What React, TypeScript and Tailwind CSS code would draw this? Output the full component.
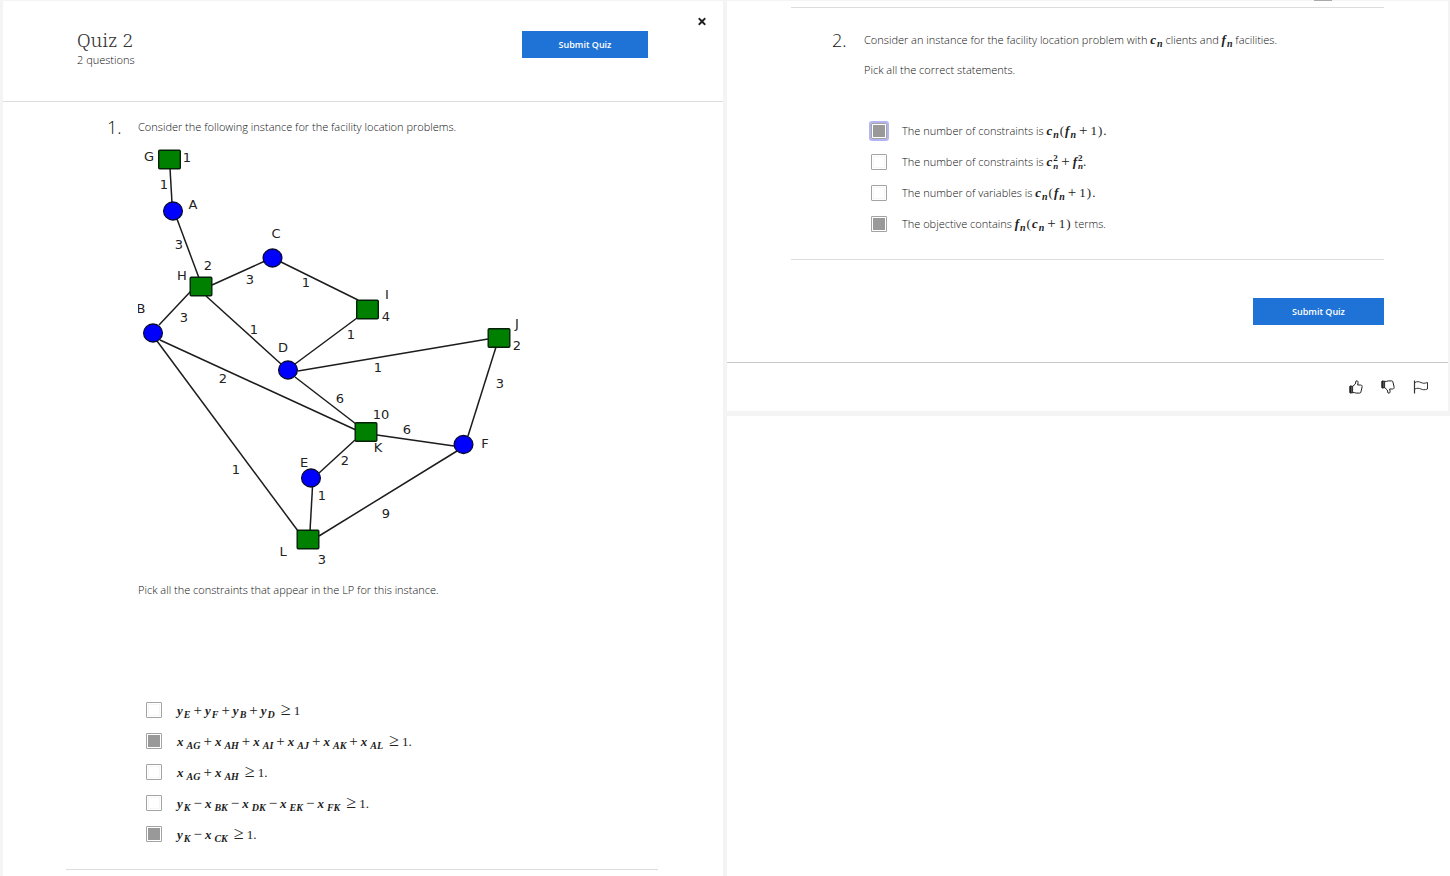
import { useId, useState, type ReactNode } from "react";
import { FaTimes } from "react-icons/fa";

type Point = [number, number];

const clients: Record<string, Point> = {
  A: [173, 211],
  B: [153, 333],
  C: [272.5, 258],
  D: [288, 370],
  E: [311, 478],
  F: [463.5, 444.5],
};

const facilities: Record<string, Point> = {
  G: [169.5, 159.5],
  H: [201, 286.5],
  I: [367.5, 309.5],
  J: [499, 338],
  K: [366, 432],
  L: [308, 539.5],
};

const edges: [number, number, number, number][] = [
  [170, 168, 172, 203],
  [177, 219, 199, 278],
  [212, 285, 265, 261],
  [281, 262, 358, 300],
  [191, 291, 159, 325],
  [206, 296, 281, 364],
  [357, 318, 295, 364],
  [298, 371, 488, 339],
  [496, 347, 468, 436],
  [295, 377, 356, 424],
  [160, 340, 356, 430],
  [157, 341, 298, 531],
  [377, 435, 454, 446],
  [355, 440, 319, 473],
  [312.5, 487, 310, 531],
  [319, 536, 457, 451],
];

const labels: [string, number, number][] = [
  ["G", 149, 157], ["1", 187, 158], ["1", 164, 185], ["A", 193, 205],
  ["3", 179, 245], ["2", 208, 266], ["H", 182, 276], ["C", 276, 234],
  ["3", 250, 280], ["1", 306, 283], ["I", 387, 295], ["4", 386, 317],
  ["J", 517, 324], ["2", 517, 346], ["B", 141, 309], ["3", 184, 318],
  ["1", 254, 330], ["D", 283, 348], ["1", 351, 335], ["1", 378, 368],
  ["2", 223, 379], ["6", 340, 399], ["3", 500, 384], ["10", 381, 415],
  ["6", 407, 430], ["K", 378, 448], ["F", 485, 444], ["E", 304, 463],
  ["2", 345, 461], ["1", 236, 470], ["1", 322, 496], ["9", 386, 514],
  ["L", 283, 552], ["3", 322, 560],
];

function Graph() {
  return (
    <svg
      viewBox="138 145 396 426"
      width={396}
      height={426}
      role="img"
      aria-label="Facility location instance"
      className="block max-w-full"
    >
      <g stroke="#1c1c1c" strokeWidth="1.5">
        {edges.map(([x1, y1, x2, y2], i) => (
          <line key={i} x1={x1} y1={y1} x2={x2} y2={y2} />
        ))}
      </g>
      {Object.entries(clients).map(([name, [x, y]]) => (
        <ellipse key={name} cx={x} cy={y} rx="9.4" ry="9" fill="#0000fe" stroke="#0a0a30" strokeWidth="1.3" />
      ))}
      {Object.entries(facilities).map(([name, [x, y]]) => (
        <rect key={name} x={x - 10.8} y={y - 9.2} width="21.6" height="18.4" rx="1" fill="#008000" stroke="#06200a" strokeWidth="1.4" />
      ))}
      <g fill="#222" textAnchor="middle" className="font-['DejaVu_Sans',sans-serif] text-[13px] font-normal">
        {labels.map(([text, x, y], i) => (
          <text key={i} x={x} y={y + 4}>{text}</text>
        ))}
      </g>
    </svg>
  );
}

function M({ children }: { children: ReactNode }) {
  return (
    <span className="inline-flex items-baseline font-['Liberation_Serif',serif] text-[13px] leading-4 font-normal text-[#222]">
      {children}
    </span>
  );
}

function V({ v, sub, sup }: { v: string; sub: string; sup?: string }) {
  return (
    <span className="inline-flex items-baseline font-bold italic">
      {v}
      {sup ? (
        <span className="relative -top-[5px] ml-px inline-grid h-2 text-[9px] leading-[8px]">
          <span className="not-italic">{sup}</span>
          <span>{sub}</span>
        </span>
      ) : (
        <span className={"relative top-[3px] text-[10px] leading-none " + (v === "x" ? "ml-[3px]" : "ml-px")}>{sub}</span>
      )}
    </span>
  );
}

function Op({ children }: { children: ReactNode }) {
  return <span className="px-[3px] text-[15px] leading-none">{children}</span>;
}

function Paren({ children }: { children: ReactNode }) {
  return <span className="px-px">{children}</span>;
}

function Sum({ terms, op, end }: { terms: [string, string][]; op: string; end: string }) {
  return (
    <M>
      {terms.map(([v, sub], i) => (
        <span key={sub} className="inline-flex items-baseline">
          {i > 0 && <Op>{op}</Op>}
          <V v={v} sub={sub} />
        </span>
      ))}
      <span className="pr-[3px] pl-[6px] text-[18px] leading-none">≥</span>
      <span>{end}</span>
    </M>
  );
}

function Option({ checked, focused, children }: { checked?: boolean; focused?: boolean; children: ReactNode }) {
  const id = useId();
  const [on, setOn] = useState(!!checked);
  return (
    <li className="flex h-[31px] items-center gap-[15px]">
      <input
        id={id}
        type="checkbox"
        checked={on}
        onChange={(e) => setOn(e.target.checked)}
        className={
          "size-4 shrink-0 appearance-none rounded-[1px] border border-[#a3a3a3] bg-white shadow-[inset_0_0_0_1px_#fff,inset_0_0_0_2px_#f6f6f6] checked:bg-[#999] checked:shadow-[inset_0_0_0_1px_#fff]" +
          (focused ? " outline-2 outline-[#b4b4f4]" : "")
        }
      />
      <label htmlFor={id} className="flex items-baseline whitespace-pre">
        {children}
      </label>
    </li>
  );
}

function Submit({ className }: { className: string }) {
  return (
    <button type="button" className={"h-[27px] bg-[#2073d6] text-[9px] font-semibold text-white " + className}>
      Submit Quiz
    </button>
  );
}

function Thumb({ down }: { down?: boolean }) {
  return (
    <svg width="14" height="14" viewBox="0 0 14 14" fill="none" stroke="#222" strokeWidth="1" strokeLinejoin="round" className={down ? "-scale-y-100" : ""}>
      <path d="M1 6.200h2.600v6.600H1z" />
      <path d="M1 6.200h1.200v6.600H1z" fill="#222" />
      <path d="M3.600 6.500 6.300 4 7 1c1.500-.5 2.300.4 2.100 1.800L8.600 5h3c1.400 0 1.700 1.100 1.500 2l-1.200 5.100c-.2.700-.6 1-1.300 1H7.200L5.400 12.600H3.600" />
    </svg>
  );
}

function Flag() {
  return (
    <svg width="16" height="14" viewBox="0 0 16 14" fill="none" stroke="#333" strokeWidth="1">
      <path d="M1.500 .5v13" strokeWidth="1.200" />
      <path d="M2 2.500c2-1.200 4-1 6 0s3.500 1 6.500 0v6.500c-3 1-4.500 1-6.500 0s-4-1-6 0" />
    </svg>
  );
}

export default function App() {
  return (
    <div className="flex min-h-screen items-stretch bg-[#f4f4f4] pl-[3px] font-['Open_Sans',sans-serif] text-[11px] leading-4 font-light text-[#111]">
      <main className="mt-px min-w-0 flex-[720] bg-white">
        <header className="flex h-[101px] items-start border-b border-[#ddd]">
          <div className="flex-1 pt-[27px] pl-[74px]">
            <h1 className="font-['Noto_Serif','DejaVu_Serif',serif] text-[19px] leading-6 font-light text-[#333]">Quiz 2</h1>
            <p>2 questions</p>
          </div>
          <Submit className="mt-[30px] w-[126px]" />
          <button type="button" aria-label="Close" className="mt-[15px] mr-4 ml-[49px] flex size-[10px] items-center justify-center text-[#222]">
            <FaTimes size={11} />
          </button>
        </header>
        <section className="pr-[65px] pl-[63px]">
          <div className="flex border-b border-[#ddd] pt-[17px] pb-5 pl-[41px]">
            <span className="w-[31px] text-[18px] leading-4">1.</span>
            <div>
              <p>Consider the following instance for the facility location problems.</p>
              <div className="pt-[10px]">
                <Graph />
              </div>
              <p className="pt-[11px]">Pick all the constraints that appear in the LP for this instance.</p>
              <ul className="pt-[96px] pl-2">
                <Option><Sum op="+" end="1" terms={[["y", "E"], ["y", "F"], ["y", "B"], ["y", "D"]]} /></Option>
                <Option checked><Sum op="+" end="1." terms={[["x", "AG"], ["x", "AH"], ["x", "AI"], ["x", "AJ"], ["x", "AK"], ["x", "AL"]]} /></Option>
                <Option><Sum op="+" end="1." terms={[["x", "AG"], ["x", "AH"]]} /></Option>
                <Option><Sum op="−" end="1." terms={[["y", "K"], ["x", "BK"], ["x", "DK"], ["x", "EK"], ["x", "FK"]]} /></Option>
                <Option checked><Sum op="−" end="1." terms={[["y", "K"], ["x", "CK"]]} /></Option>
              </ul>
            </div>
          </div>
        </section>
      </main>
      <div className="ml-1 min-w-0 flex-[723] bg-white">
        <div className="border-r-2 border-b-5 border-[#f4f4f4] bg-white">
          <div className="flex h-px justify-end bg-[#f4f4f4] pr-[116px]">
            <span className="w-[18px] bg-[#aaa]" />
          </div>
          <section className="mt-[6px] mr-16 ml-16 border-y border-[#ddd] pb-5 pl-[41px]">
            <div className="flex pt-6">
              <span className="w-[32px] text-[18px] leading-4">2.</span>
              <div>
                <p className="flex items-baseline whitespace-pre">
                  Consider an instance for the facility location problem with <M><V v="c" sub="n" /></M> clients and <M><V v="f" sub="n" /></M> facilities.
                </p>
                <p className="pt-[14px]">Pick all the correct statements.</p>
                <ul className="pt-[37px] pl-[7px]">
                  <Option checked focused>The number of constraints is <M><V v="c" sub="n" /><Paren>(</Paren><V v="f" sub="n" /><Op>+</Op>1<Paren>)</Paren>.</M></Option>
                  <Option>The number of constraints is <M><V v="c" sub="n" sup="2" /><Op>+</Op><V v="f" sub="n" sup="2" />.</M></Option>
                  <Option>The number of variables is <M><V v="c" sub="n" /><Paren>(</Paren><V v="f" sub="n" /><Op>+</Op>1<Paren>)</Paren>.</M></Option>
                  <Option checked>The objective contains <M><V v="f" sub="n" /><Paren>(</Paren><V v="c" sub="n" /><Op>+</Op>1<Paren>)</Paren></M> terms.</Option>
                </ul>
              </div>
            </div>
          </section>
          <div className="flex justify-end pt-[38px] pr-16 pb-[37px]">
            <Submit className="w-[131px]" />
          </div>
          <footer className="flex h-[49px] items-center justify-end gap-[18px] border-t border-[#c8c8c8] pr-[19px]">
            <button type="button" aria-label="Like"><Thumb /></button>
            <button type="button" aria-label="Dislike"><Thumb down /></button>
            <button type="button" aria-label="Report an issue"><Flag /></button>
          </footer>
        </div>
      </div>
    </div>
  );
}
